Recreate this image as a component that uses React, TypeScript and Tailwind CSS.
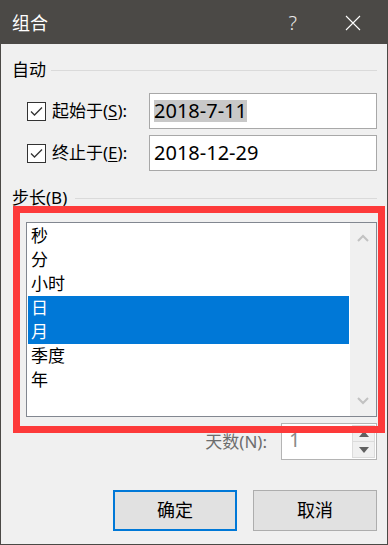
import React from 'react'

const steps = [
  { label: '秒', selected: false },
  { label: '分', selected: false },
  { label: '小时', selected: false },
  { label: '日', selected: true },
  { label: '月', selected: true },
  { label: '季度', selected: false },
  { label: '年', selected: false },
]

function CheckBox() {
  return (
    <span className="flex h-[19px] w-[19px] shrink-0 items-center justify-center border border-[#333333] bg-white">
      <svg width="13" height="11" viewBox="0 0 13 11" fill="none">
        <path d="M1 5.5 L4.5 9 L12 1.5" stroke="#333333" strokeWidth="1.3" />
      </svg>
    </span>
  )
}

function GroupHeader({ children, gap }: { children: React.ReactNode; gap: string }) {
  return (
    <div className="flex h-[24px] items-center pl-[11px] pr-[10px]">
      <span className="text-[17px] leading-[24px] text-black">{children}</span>
      <span className={`h-px flex-1 bg-[#dadada] ${gap}`} />
    </div>
  )
}

function DateRow({ label, hotkey, value, selected }: { label: string; hotkey: string; value: string; selected?: boolean }) {
  return (
    <div className="flex h-[36px] items-center pl-[26px] pr-[10px]">
      <CheckBox />
      <span className="ml-[6px] w-[97px] text-[17px] leading-[24px] text-black">
        {label}(<span className="underline underline-offset-2">{hotkey}</span>):
      </span>
      <div className="flex h-full flex-1 items-center border border-[#a8a8a8] bg-white pl-[4px]">
        <span className={`text-[20px] leading-[22px] text-black ${selected ? 'bg-[#c8c8c8]' : ''}`}>{value}</span>
      </div>
    </div>
  )
}

export default function App() {
  return (
    <div className="relative flex h-[545px] w-[388px] flex-col border border-[#4b4946] bg-[#f0f0f0] font-['Noto_Sans','Noto_Sans_CJK_SC',sans-serif]">
      <div className="flex h-[43px] shrink-0 items-center bg-[#4b4946] pl-[11px] text-white">
        <span className="text-[18px] leading-[24px]">组合</span>
        <span className="ml-auto mr-[48px] text-[20px] font-light leading-[24px] text-[#e8e8e8]">?</span>
        <svg width="16" height="16" viewBox="0 0 16 16" className="mr-[26px]">
          <path d="M1 1 L15 15 M15 1 L1 15" stroke="#ffffff" strokeWidth="1.1" />
        </svg>
      </div>

      <div className="mt-[14px]">
        <GroupHeader gap="ml-[5px]">自动</GroupHeader>
      </div>

      <div className="mt-[11px] flex flex-col gap-[6px]">
        <DateRow label="起始于" hotkey="S" value="2018-7-11" selected />
        <DateRow label="终止于" hotkey="E" value="2018-12-29" />
      </div>

      <div className="mt-[15px]">
        <GroupHeader gap="ml-[8px]">步长(B)</GroupHeader>
      </div>

      <div className="ml-[25px] mr-[10px] mt-[12px] flex h-[195px] border border-[#828790] bg-white">
        <div className="flex flex-1 flex-col p-px">
          {steps.map((s) => (
            <div
              key={s.label}
              className={`h-[24px] pl-[3px] text-[17px] leading-[24px] ${s.selected ? 'bg-[#0078d7] text-white' : 'text-black'}`}
            >
              {s.label}
            </div>
          ))}
        </div>
        <div className="flex w-[26px] flex-col items-center justify-between bg-[#f0f0f0] py-[11px]">
          <svg width="12" height="8" viewBox="0 0 12 8">
            <path d="M1 7 L6 2 L11 7" stroke="#c2c2c2" strokeWidth="2" fill="none" />
          </svg>
          <svg width="12" height="8" viewBox="0 0 12 8">
            <path d="M1 1 L6 6 L11 1" stroke="#c2c2c2" strokeWidth="2" fill="none" />
          </svg>
        </div>
      </div>

      <div className="mt-[6px] flex h-[37px] items-center justify-end pr-[10px]">
        <span className="mr-[14px] text-[17px] leading-[24px] text-[#6d6d6d]">天数(N):</span>
        <div className="flex h-full w-[96px] border border-[#b4b4b4] bg-white">
          <span className="flex-1 pl-[7px] pt-[5px] text-[20px] leading-[22px] text-[#8a8a8a]">1</span>
          <div className="m-px flex w-[23px] flex-col bg-[#f0f0f0]">
            <div className="flex flex-1 items-center justify-center border border-[#dcdcdc]">
              <svg width="10" height="6" viewBox="0 0 10 6">
                <path d="M0 6 L5 0 L10 6 Z" fill="#606060" />
              </svg>
            </div>
            <div className="flex flex-1 items-center justify-center border border-t-0 border-[#dcdcdc]">
              <svg width="10" height="6" viewBox="0 0 10 6">
                <path d="M0 0 L10 0 L5 6 Z" fill="#606060" />
              </svg>
            </div>
          </div>
        </div>
      </div>

      <div className="mt-[30px] flex justify-end gap-[16px] pr-[10px]">
        <button className="h-[41px] w-[124px] border-2 border-[#0078d7] bg-[#e1e1e1] text-[18px] text-black">确定</button>
        <button className="h-[41px] w-[124px] border border-[#adadad] bg-[#e1e1e1] text-[18px] text-black">取消</button>
      </div>

      <div className="pointer-events-none absolute left-[12px] top-[205px] h-[227px] w-[372px] border-[7px] border-[#fd3a3a]" />
    </div>
  )
}
